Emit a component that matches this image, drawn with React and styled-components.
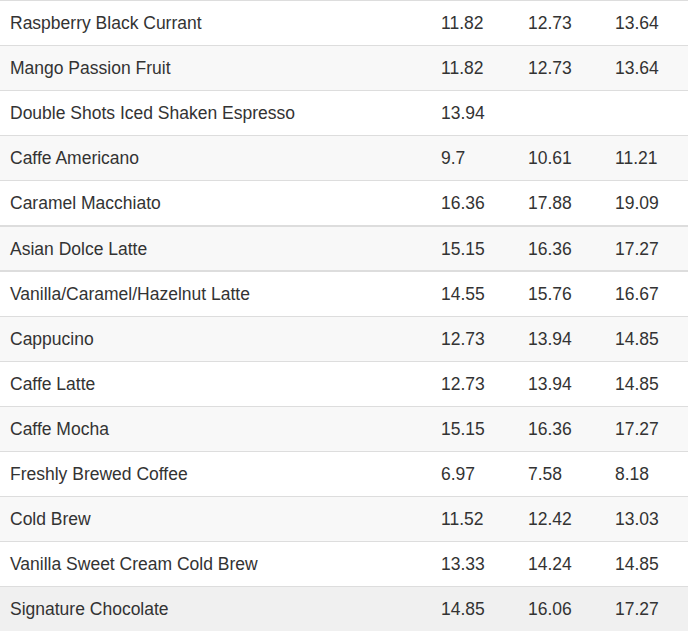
import React from "react";
import styled, { createGlobalStyle } from "styled-components";

// menu prices: name plus up to three sizes
const drinks = [
  { name: "Raspberry Black Currant", prices: ["11.82", "12.73", "13.64"] },
  { name: "Mango Passion Fruit", prices: ["11.82", "12.73", "13.64"] },
  { name: "Double Shots Iced Shaken Espresso", prices: ["13.94"] },
  { name: "Caffe Americano", prices: ["9.7", "10.61", "11.21"] },
  { name: "Caramel Macchiato", prices: ["16.36", "17.88", "19.09"] },
  { name: "Asian Dolce Latte", prices: ["15.15", "16.36", "17.27"], boxed: true },
  { name: "Vanilla/Caramel/Hazelnut Latte", prices: ["14.55", "15.76", "16.67"], afterBox: true },
  { name: "Cappucino", prices: ["12.73", "13.94", "14.85"] },
  { name: "Caffe Latte", prices: ["12.73", "13.94", "14.85"] },
  { name: "Caffe Mocha", prices: ["15.15", "16.36", "17.27"] },
  { name: "Freshly Brewed Coffee", prices: ["6.97", "7.58", "8.18"] },
  { name: "Cold Brew", prices: ["11.52", "12.42", "13.03"] },
  { name: "Vanilla Sweet Cream Cold Brew", prices: ["13.33", "14.24", "14.85"] },
  { name: "Signature Chocolate", prices: ["14.85", "16.06", "17.27"], hover: true },
];

const GlobalStyle = createGlobalStyle`
  body {
    margin: 0;
    background: #fff;
    font-family: "Liberation Sans", Arial, sans-serif;
    overflow: hidden;
  }
`;

const App = () => {
  return (
    <>
      <GlobalStyle />
      <Table>
        {drinks.map((drink, i) => (
          <Row
            key={drink.name}
            $striped={i % 2 === 1}
            $boxed={drink.boxed}
            $afterBox={drink.afterBox}
            $hover={drink.hover}
          >
            <Cell>{drink.name}</Cell>
            {[0, 1, 2].map((n) => (
              <Cell key={n}>{drink.prices[n] || ""}</Cell>
            ))}
          </Row>
        ))}
      </Table>
    </>
  );
};

const Table = styled.div`
  display: flex;
  flex-direction: column;
  width: 694px;
  border-top: 1px solid #ddd;
`;

const Row = styled.div`
  display: grid;
  grid-template-columns: 431px 87px 87px 1fr;
  height: ${(p) => (p.$boxed ? "43px" : "44px")};
  align-items: center;
  border-top: ${(p) =>
    p.$boxed ? "2px solid #ddd" : p.$afterBox ? "none" : "1px solid #ddd"};
  border-bottom: ${(p) => (p.$boxed ? "2px solid #ddd" : "none")};
  background: ${(p) =>
    p.$hover ? "#f0f0f0" : p.$striped ? "#f8f8f8" : "#fff"};
  &:first-child {
    border-top: none;
  }
`;

const Cell = styled.div`
  padding: 0 10px;
  font-size: 17.5px;
  line-height: 20px;
  color: #333;
  white-space: nowrap;
`;

export default App;
